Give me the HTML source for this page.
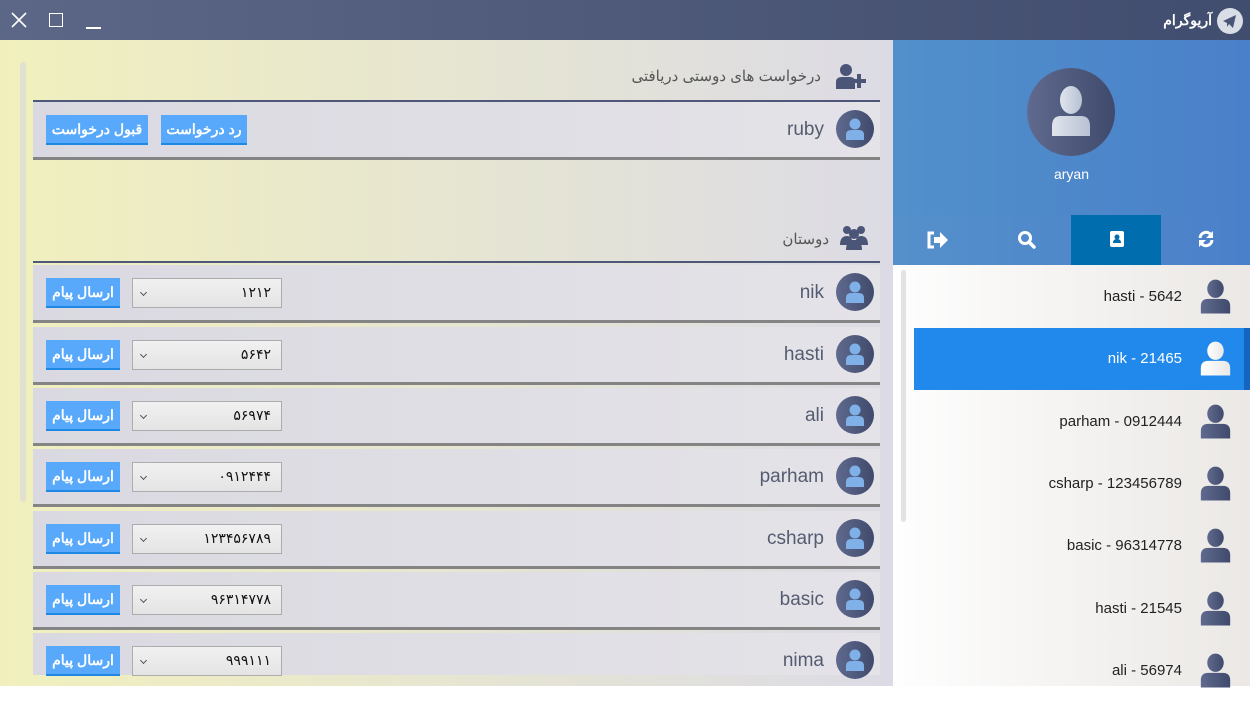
<!DOCTYPE html>
<html><head><meta charset="utf-8"><style>
*{margin:0;padding:0;box-sizing:border-box}
body{width:1250px;height:686px;overflow:hidden;position:relative;font-family:"Liberation Sans","DejaVu Sans",sans-serif;background:#fff}
.abs{position:absolute}
#title{left:0;top:0;width:1250px;height:40px;background:linear-gradient(90deg,#5c6686,#414d6e)}
#left{left:0;top:40px;width:893px;height:646px;background:linear-gradient(90deg,#f1f0bd,#dcdbe5);overflow:hidden}
.row{position:absolute;left:33px;width:847px;height:58px;background:linear-gradient(90deg,#dad9e1,#e4e3e8);border-bottom:3px solid #848484}
.av{position:absolute;right:6px;top:8px;width:38px;height:38px}
.name{position:absolute;right:56px;top:17px;font-size:19px;color:#555c70}
.btn{position:absolute;top:13px;height:30px;background:#58a9fb;border-bottom:2px solid #1e88e5;color:#fff;font-family:"Liberation Sans","Noto Sans CJK SC",sans-serif;font-size:14px;font-weight:bold;text-align:center;line-height:28px;direction:rtl}
.combo{position:absolute;left:99px;top:13px;width:150px;height:30px;background:linear-gradient(#f1f1f1,#e4e4e4);border:1px solid #acacac;direction:rtl;font-family:"DejaVu Sans","Noto Sans CJK SC",sans-serif;font-size:14px;line-height:28px;padding-right:10px;color:#111}
.combo:after{content:"";position:absolute;left:8px;top:11px;width:4px;height:4px;border-right:1px solid #555;border-bottom:1px solid #555;transform:rotate(45deg)}
.hdr{position:absolute;font-family:"Liberation Sans","Noto Sans CJK SC",sans-serif;font-size:15px;color:#555;direction:rtl}
.line{position:absolute;left:33px;width:847px;height:2px;background:#4f5878}
#right{left:893px;top:40px;width:357px;height:646px}
.item{position:absolute;left:914px;width:330px;height:62px}
.it{position:absolute;right:62px;top:22px;font-size:15px;color:#222}
.pi{position:absolute;right:12px;top:12px;width:33px;height:38px}
</style></head><body>
<svg width="0" height="0" style="position:absolute">
<defs>
<linearGradient id="dk" x1="0" x2="1"><stop offset="0" stop-color="#5f6a8e"/><stop offset="1" stop-color="#3f4a6c"/></linearGradient>
<linearGradient id="wh" x1="0" x2="1"><stop offset="0" stop-color="#ffffff"/><stop offset="1" stop-color="#e8e8e8"/></linearGradient>
<linearGradient id="lb" x1="0" x2="1"><stop offset="0" stop-color="#e0e4ec"/><stop offset="1" stop-color="#b8c2d4"/></linearGradient>
</defs></svg>

<div id="title" class="abs">
<svg class="abs" style="left:10px;top:11px" width="18" height="18"><path d="M2 2L16 16M16 2L2 16" stroke="#fff" stroke-width="1.6"/></svg>
<div class="abs" style="left:49px;top:13px;width:14px;height:14px;border:1.5px solid #fff"></div>
<div class="abs" style="left:86px;top:27px;width:15px;height:1.5px;background:#fff"></div>
<div class="abs" style="right:38px;top:12px;color:#fff;font-size:14px;font-weight:bold;font-family:'Liberation Sans','Noto Sans CJK SC',sans-serif">آریوگرام</div>
<svg class="abs" style="left:1216px;top:7px" width="28" height="28"><circle cx="14" cy="14" r="13" fill="#d8dde6"/><path d="M7 14L20 8L17 21L13 17L11 20L11 16Z" fill="#4a5575"/></svg>
</div>

<div id="left" class="abs">
<div class="abs" style="left:20px;top:22px;width:6px;height:440px;background:#e2e1cf;border-radius:3px"></div>
<svg class="abs" style="left:834px;top:22px" width="36" height="28"><circle cx="12" cy="8" r="6" fill="#4a5577"/><path d="M2 27V20Q2 15 8 15H16Q20 15 21 18V27Z" fill="#4a5577"/><path d="M25 12V26M18 19H32" stroke="#4a5577" stroke-width="4"/></svg>
<div class="hdr" style="right:72px;top:27px">درخواست های دوستی دریافتی</div>
<div class="line" style="top:60px"></div>
<svg class="abs" style="left:838px;top:183px" width="32" height="28"><circle cx="9" cy="7" r="4" fill="#4a5577"/><circle cx="23" cy="7" r="4" fill="#4a5577"/><circle cx="16" cy="11" r="5" fill="#4a5577"/><path d="M2 22Q2 13 9 13Q13 13 14 17H18Q19 13 23 13Q30 13 30 22Z" fill="#4a5577"/><path d="M8 27Q8 17 16 17Q24 17 24 27Z" fill="#4a5577"/></svg>
<div class="hdr" style="right:64px;top:190px">دوستان</div>
<div class="line" style="top:221px"></div>
</div>

<div id="rows"></div>

<div id="right" class="abs">
<div class="abs" style="left:0;top:0;width:357px;height:175px;background:linear-gradient(90deg,#5190cb,#4a80c9)"></div>
<svg class="abs" style="left:134px;top:28px" width="88" height="88"><circle cx="44" cy="44" r="44" fill="url(#dk)"/><ellipse cx="44" cy="32" rx="11" ry="14" fill="url(#lb)"/><path d="M25 68V58Q25 48 34 48H54Q63 48 63 58V68Z" fill="url(#lb)"/></svg>
<div class="abs" style="left:0;width:357px;top:126px;text-align:center;color:#fff;font-size:14px">aryan</div>
<div class="abs" style="left:0;top:175px;width:357px;height:50px;background:linear-gradient(90deg,#5590cb,#4a80c9)"></div>
<div class="abs" style="left:178px;top:175px;width:90px;height:50px;background:#006daf"></div>
<svg class="abs" style="left:33px;top:190px" width="24" height="20"><path d="M8 3H3V17H8" stroke="#fff" stroke-width="3" fill="none"/><path d="M8 7H14V2L22 10L14 18V13H8Z" fill="#fff"/></svg>
<svg class="abs" style="left:124px;top:190px" width="20" height="20"><circle cx="8" cy="8" r="5.5" stroke="#fff" stroke-width="3" fill="none"/><path d="M12 12L17 17" stroke="#fff" stroke-width="3.5" stroke-linecap="round"/></svg>
<svg class="abs" style="left:214px;top:189px" width="20" height="20"><rect x="3" y="2" width="14" height="16" rx="2" fill="#fff"/><circle cx="10" cy="8" r="2.5" fill="#006daf"/><path d="M6 14Q6 10 10 10Q14 10 14 14Z" fill="#006daf"/></svg>
<svg class="abs" style="left:303px;top:189px" width="20" height="20"><path d="M4 9A6 6 0 0 1 15 6" stroke="#fff" stroke-width="3" fill="none"/><path d="M17 2V9H10Z" fill="#fff"/><path d="M16 11A6 6 0 0 1 5 14" stroke="#fff" stroke-width="3" fill="none"/><path d="M3 18V11H10Z" fill="#fff"/></svg>
<div class="abs" style="left:0;top:225px;width:357px;height:421px;background:linear-gradient(90deg,#fefefe,#ebe8e5)"></div>
<div class="abs" style="left:8px;top:230px;width:5px;height:252px;background:#e3e3e3;border-radius:3px"></div>
<div class="abs" style="left:351px;top:288px;width:6px;height:62px;background:#1565c0"></div>
</div>
<div id="items"></div>

<script>
var rows=[["nik","۱۲۱۲"],["hasti","۵۶۴۲"],["ali","۵۶۹۷۴"],["parham","۰۹۱۲۴۴۴"],["csharp","۱۲۳۴۵۶۷۸۹"],["basic","۹۶۳۱۴۷۷۸"],["nima","۹۹۹۱۱۱"]];
var tops=[265,327,388,449,511,572,633];
var av='<svg class="av" viewBox="0 0 38 38"><circle cx="19" cy="19" r="19" fill="url(#dk)"/><circle cx="19" cy="14" r="5.5" fill="#7fb0e8"/><path d="M10 30V25Q10 20 15 20H23Q28 20 28 25V30Z" fill="#7fb0e8"/></svg>';
var h='';
h+='<div class="row" style="top:102px">'+av+'<div class="name">ruby</div><div class="btn" style="left:13px;width:102px">قبول درخواست</div><div class="btn" style="left:128px;width:86px">رد درخواست</div></div>';
rows.forEach(function(r,i){var t=tops[i];var hh=(t+58>675)?(675-t):58;
h+='<div class="row" style="top:'+t+'px;height:'+hh+'px;'+(hh<58?'border-bottom:none':'')+'">'+av+'<div class="name">'+r[0]+'</div><div class="combo">'+r[1]+'</div><div class="btn" style="left:13px;width:74px">ارسال پیام</div></div>';});
document.getElementById('rows').innerHTML=h;
var it=["hasti - 5642","nik - 21465","parham - 0912444","csharp - 123456789","basic - 96314778","hasti - 21545","ali - 56974"];
var g='';
it.forEach(function(s,i){var t=266+i*62.3;var sel=i==1;
g+='<div class="item" style="top:'+t+'px;'+(sel?'background:#2289ec':'')+'"><div class="it" style="'+(sel?'color:#fff':'')+'">'+s+'</div><svg class="pi" viewBox="0 0 36 40"><ellipse cx="18" cy="11" rx="9" ry="10" fill="'+(sel?'url(#wh)':'url(#dk)')+'"/><path d="M2 38V30Q2 22 10 22H26Q34 22 34 30V38Z" fill="'+(sel?'url(#wh)':'url(#dk)')+'"/></svg></div>';});
document.getElementById('items').innerHTML=g;
</script>
</body></html>
